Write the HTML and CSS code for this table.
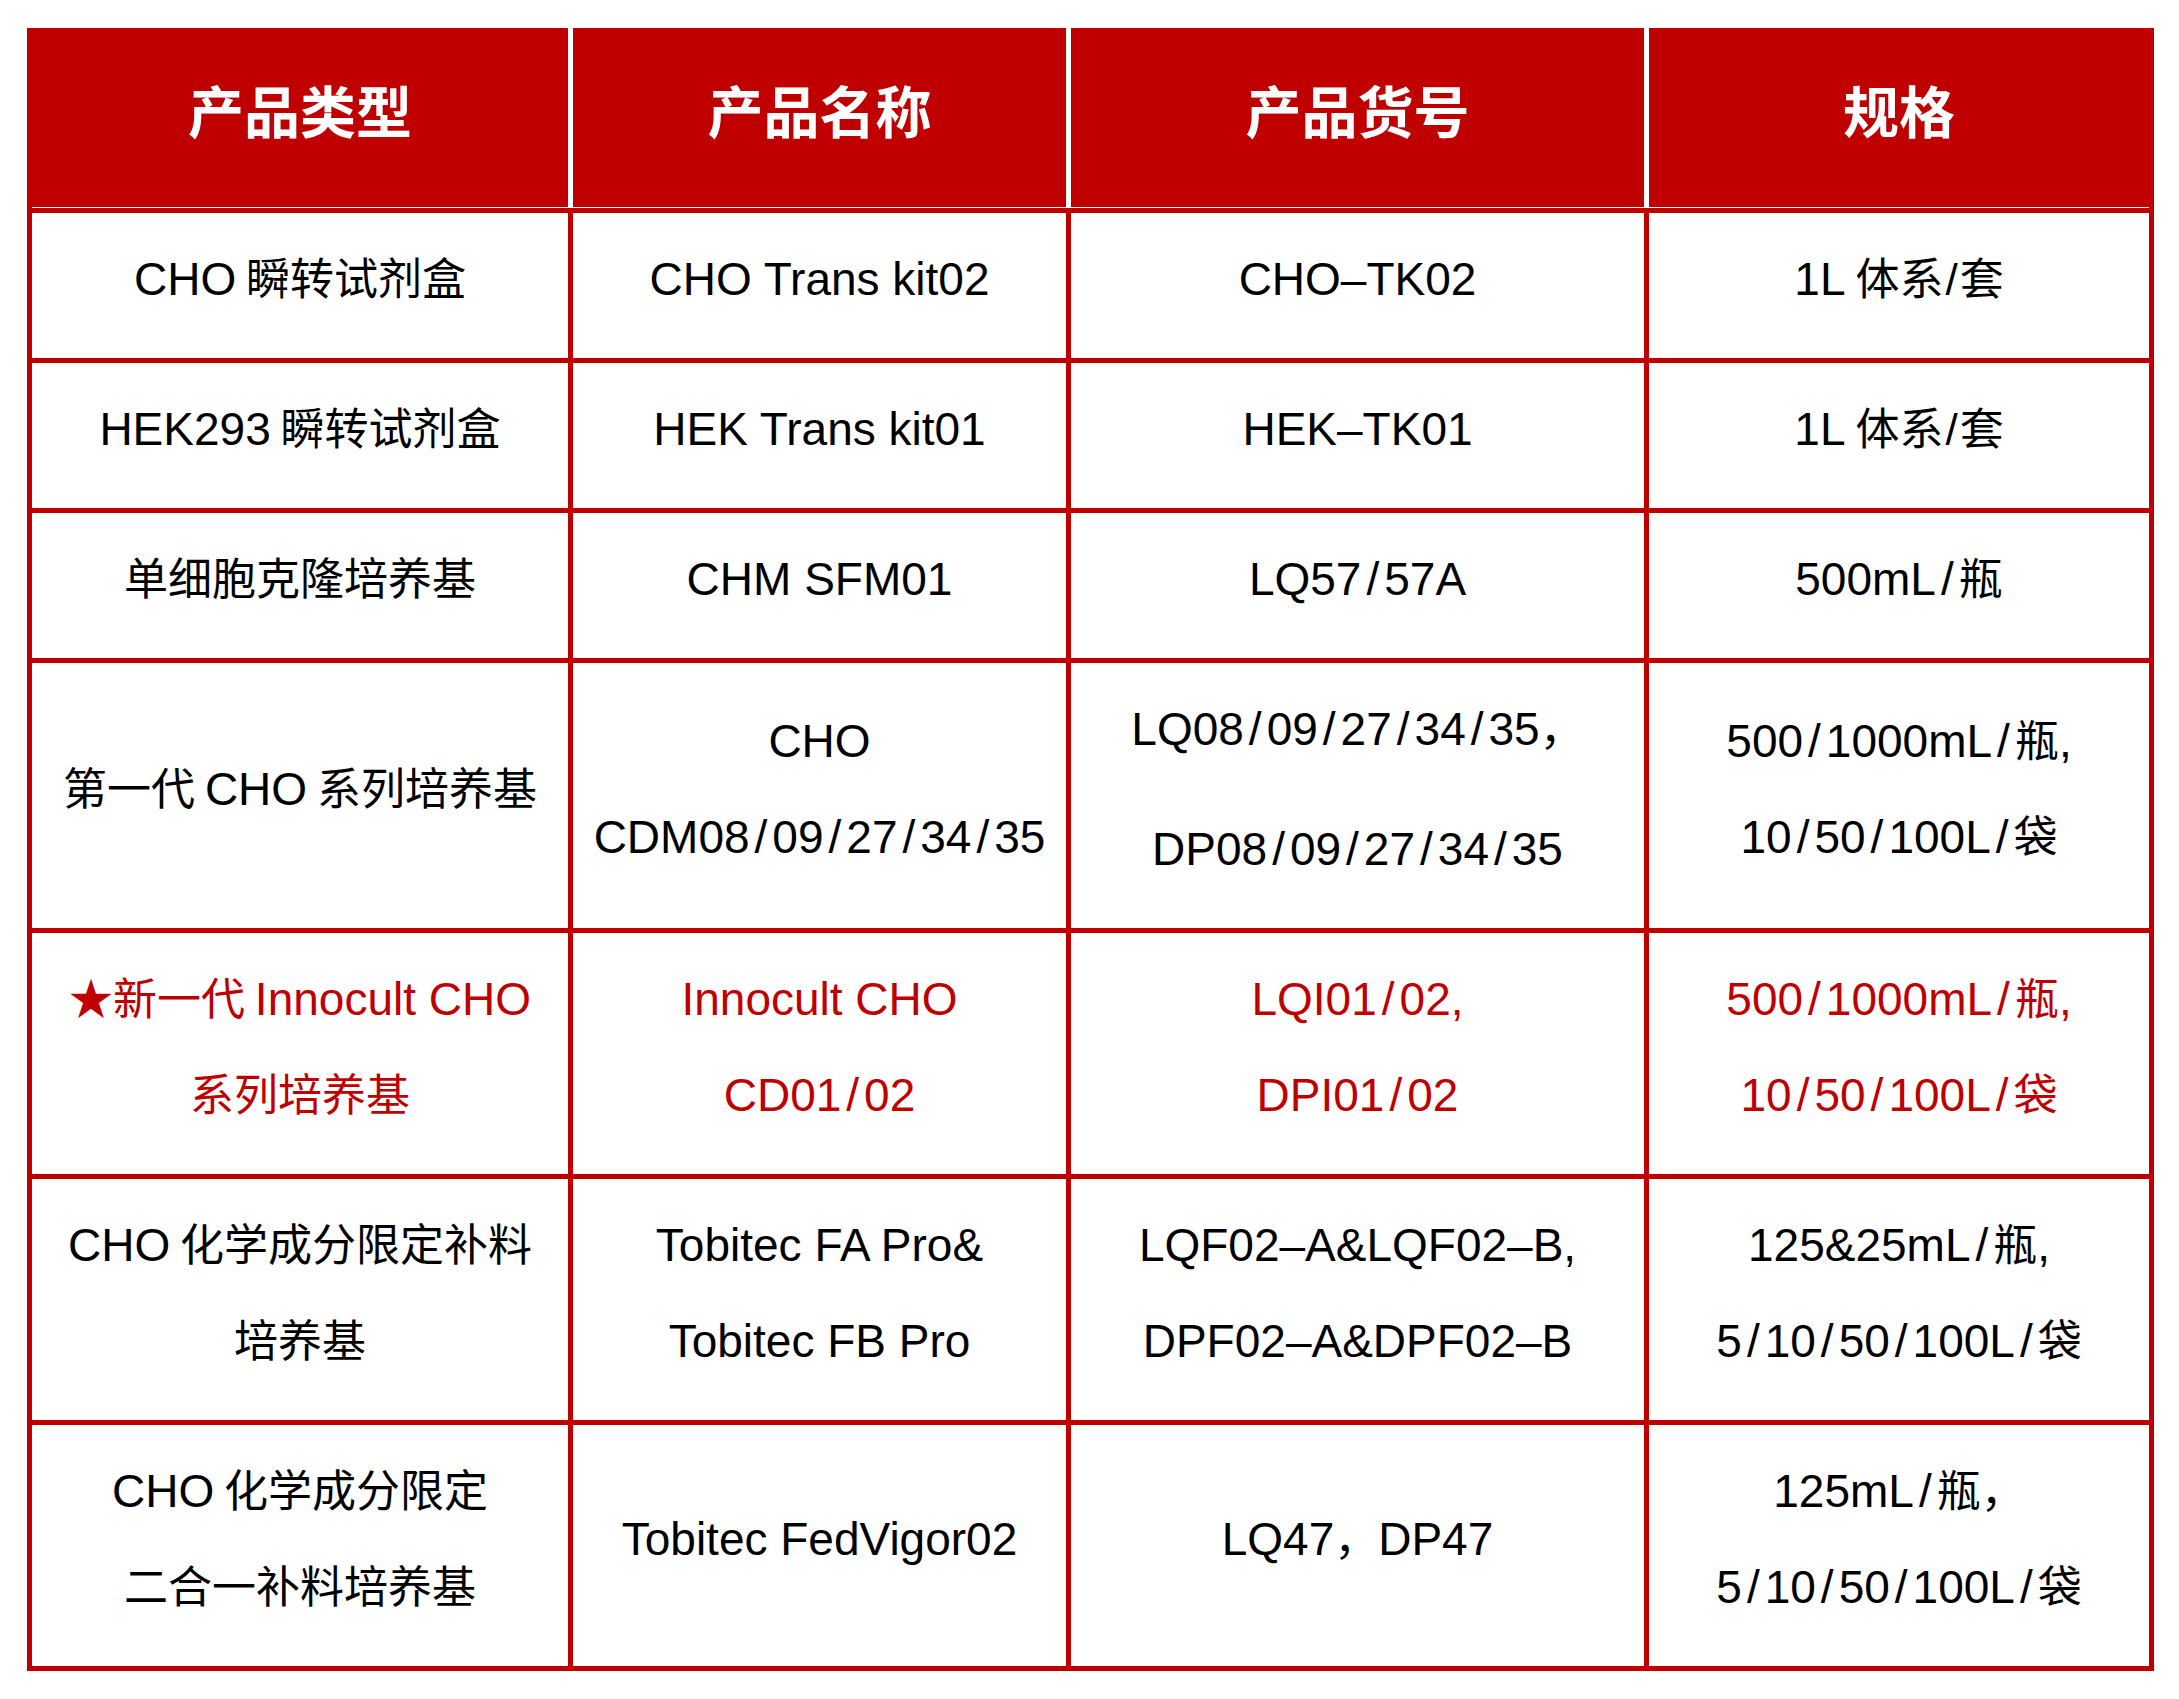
FILE: index.html
```html
<!DOCTYPE html>
<html lang="zh-CN">
<head>
<meta charset="utf-8">
<title>产品列表</title>
<link rel="stylesheet" href="styles.css">
</head>
<body>
<table class="spec">
  <colgroup>
    <col class="c1">
    <col class="c2">
    <col class="c3">
    <col class="c4">
  </colgroup>
  <thead>
    <tr>
      <th>产品类型</th>
      <th>产品名称</th>
      <th>产品货号</th>
      <th>规格</th>
    </tr>
  </thead>
  <tbody>
    <tr>
      <td>CHO<span class="zh"> 瞬转试剂盒</span></td>
      <td>CHO Trans kit02</td>
      <td>CHO–TK02</td>
      <td>1L<span class="zh"> 体系<span class="slz">/</span>套</span></td>
    </tr>
    <tr>
      <td>HEK293<span class="zh"> 瞬转试剂盒</span></td>
      <td>HEK Trans kit01</td>
      <td>HEK–TK01</td>
      <td>1L<span class="zh"> 体系<span class="slz">/</span>套</span></td>
    </tr>
    <tr>
      <td><span class="zh">单细胞克隆培养基</span></td>
      <td>CHM SFM01</td>
      <td>LQ57<span class="sl">/</span>57A</td>
      <td>500mL<span class="sl">/</span><span class="zh">瓶</span></td>
    </tr>
    <tr>
      <td><span class="zh">第一代 </span>CHO<span class="zh"> 系列培养基</span></td>
      <td>CHO<br>CDM08<span class="sl">/</span>09<span class="sl">/</span>27<span class="sl">/</span>34<span class="sl">/</span>35</td>
      <td>
        <div class="para">LQ08<span class="sl">/</span>09<span class="sl">/</span>27<span class="sl">/</span>34<span class="sl">/</span>35<span class="zh">，</span></div>
        <div class="para gap">DP08<span class="sl">/</span>09<span class="sl">/</span>27<span class="sl">/</span>34<span class="sl">/</span>35</div>
      </td>
      <td>500<span class="sl">/</span>1000mL<span class="sl">/</span><span class="zh">瓶</span>,<br>10<span class="sl">/</span>50<span class="sl">/</span>100L<span class="sl">/</span><span class="zh">袋</span></td>
    </tr>
    <tr class="hl">
      <td><span class="zh">★新一代 </span>Innocult CHO<br><span class="zh">系列培养基</span></td>
      <td>Innocult CHO<br>CD01<span class="sl">/</span>02</td>
      <td>LQI01<span class="sl">/</span>02,<br>DPI01<span class="sl">/</span>02</td>
      <td>500<span class="sl">/</span>1000mL<span class="sl">/</span><span class="zh">瓶</span>,<br>10<span class="sl">/</span>50<span class="sl">/</span>100L<span class="sl">/</span><span class="zh">袋</span></td>
    </tr>
    <tr>
      <td>CHO<span class="zh"> 化学成分限定补料</span><br><span class="zh">培养基</span></td>
      <td>Tobitec FA Pro&amp;<br>Tobitec FB Pro</td>
      <td>LQF02–A&amp;LQF02–B,<br>DPF02–A&amp;DPF02–B</td>
      <td>125&amp;25mL<span class="sl">/</span><span class="zh">瓶</span>,<br>5<span class="sl">/</span>10<span class="sl">/</span>50<span class="sl">/</span>100L<span class="sl">/</span><span class="zh">袋</span></td>
    </tr>
    <tr>
      <td>CHO<span class="zh"> 化学成分限定</span><br><span class="zh">二合一补料培养基</span></td>
      <td>Tobitec FedVigor02</td>
      <td>LQ47<span class="zh">，</span>DP47</td>
      <td>125mL<span class="sl">/</span><span class="zh">瓶，</span><br>5<span class="sl">/</span>10<span class="sl">/</span>50<span class="sl">/</span>100L<span class="sl">/</span><span class="zh">袋</span></td>
    </tr>
  </tbody>
</table>
</body>
</html>
```
FILE: styles.css
```css
html, body {
  margin: 0;
  padding: 0;
  background: #ffffff;
}

body {
  font-family: "Liberation Sans", "Noto Sans CJK SC", sans-serif;
  color: #000000;
}

.spec {
  margin: 28px 0 0 27px;
  width: 2127px;
  table-layout: fixed;
  border-collapse: separate;
  border-spacing: 0;
}

.c1 { width: 546px; }
.c2 { width: 498px; }
.c3 { width: 578px; }
.c4 { width: 505px; }

.spec th {
  background: #c00000;
  color: #ffffff;
  font-family: "Noto Sans CJK SC", sans-serif;
  font-weight: 700;
  font-size: 56px;
  line-height: 70px;
  height: 180px;
  box-sizing: border-box;
  padding: 46px 0 64px;
  text-align: center;
  vertical-align: middle;
  border-right: 5px solid #ffffff;
  box-shadow: inset 0 -1px 0 #ffffff;
}

.spec th:first-child {
  border-left: 5px solid #c00000;
}

.spec th:last-child {
  border-right-color: #c00000;
}

.spec td {
  font-size: 46px;
  line-height: 96px;
  padding: 18px 0 31px;
  text-align: center;
  vertical-align: middle;
  border-right: 5px solid #c00000;
  border-bottom: 5px solid #c00000;
  white-space: nowrap;
}

.spec td:first-child {
  border-left: 5px solid #c00000;
}

.spec tbody tr:first-child td {
  border-top: 5px solid #c00000;
}

.spec .hl td {
  color: #c00000;
}

.zh {
  font-family: "Noto Sans CJK SC", sans-serif;
  font-size: 44px;
  line-height: 1;
}

.sl {
  margin: 0 5px;
}

.slz {
  font-family: "Liberation Sans", sans-serif;
  margin: 0 2px;
}

.para.gap {
  margin-top: 24px;
}
```
